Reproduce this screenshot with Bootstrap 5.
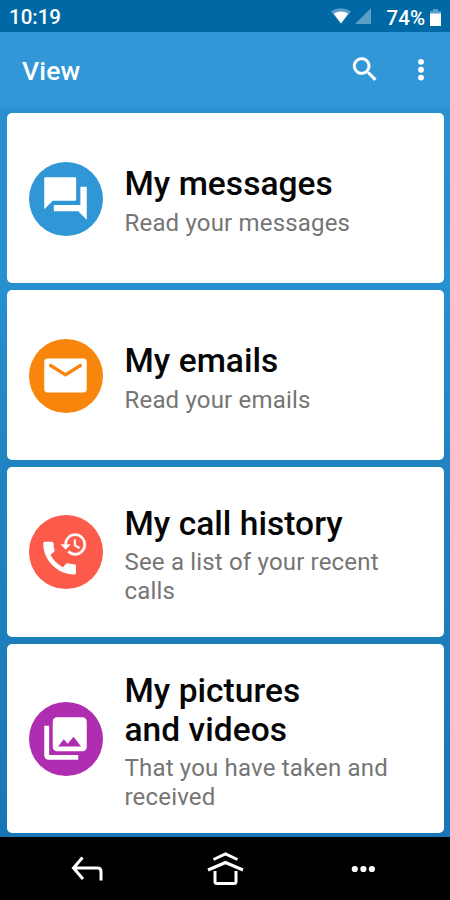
<!DOCTYPE html>
<html lang="en">
<head>
<meta charset="utf-8">
<meta name="viewport" content="width=device-width, initial-scale=1">
<title>View</title>
<link href="https://cdn.jsdelivr.net/npm/bootstrap@5.3.0/dist/css/bootstrap.min.css" rel="stylesheet">
<style>
body{font-family:Roboto,sans-serif;background:#000}
.screen{width:450px;height:900px;background:linear-gradient(#3097d6 0,#3097d6 105px,#2a8fce 112px,#2790cf 280px,#2084c2 460px,#1d7ebc 640px,#1976b6 837px)}
.status{height:32px;background:#0069a5;font-size:20.5px;font-weight:500;line-height:34px;padding:0 8px 0 9px}
.status .battery-level{line-height:32px;padding-top:3px}
.appbar{height:76px;background:#3197d6;padding:0 13.5px 0 22px}
.appbar h1{font-size:26.5px;font-weight:500;letter-spacing:.15px;padding-top:2px}
.tiles{padding:5.4px 6.5px 4px 7px;gap:6.6px}
.tile{height:170.3px;border-radius:5px;padding:0 20px 0 21.5px;gap:22px}
.tile-tall{height:189.5px}
.disc{width:74px;height:74px;margin-top:1.4px}
.disc-blue{background:#3097d6}.disc-orange{background:#f9860c}.disc-red{background:#fc5a4b}.disc-purple{background:#af2db0}
.tile-text{padding-top:6px}
.tile h2{font-size:33.5px;font-weight:500;line-height:39px;letter-spacing:.04px;color:#060606}
.tile p{font-size:24px;line-height:28.7px;letter-spacing:.18px;color:#757575;margin-top:5.5px}
.softkeys{height:63px;background:#000}
</style>
<script src="https://cdn.jsdelivr.net/npm/bootstrap@5.3.0/dist/js/bootstrap.bundle.min.js"></script>
</head>
<body>
<div class="screen d-flex flex-column overflow-hidden">
  <div class="status d-flex justify-content-between text-white">
    <span>10:19</span>
    <div class="d-flex align-items-center">
      <svg width="20" height="16" viewBox="0 0 20 16"><path d="M0 3.5Q10-3 20 3.5L10 15.5z" fill="#5c9fc6"/><path d="M2.700 5.500Q10 1.600 17.300 5.500L10 15.500z" fill="#fff"/></svg>
      <svg class="ms-1" width="16" height="16" viewBox="0 0 16 16"><path d="M0 16L16 0V16z" fill="#5c9fc6"/></svg>
      <span class="battery-level ms-3">74%</span>
      <svg class="ms-1 mt-1" width="13" height="18" viewBox="0 0 13 18"><path d="M4 0h5v2h3v3H1V2h3z" fill="#5c9fc6"/><path d="M1 4.500h11V17H1z" fill="#fff"/></svg>
    </div>
  </div>
  <header class="appbar d-flex align-items-center justify-content-between text-white">
    <h1 class="m-0">View</h1>
    <div class="d-flex align-items-center">
      <svg width="32" height="32" viewBox="0 0 24 24" fill="#fff" stroke="#fff" stroke-width=".3"><path d="M15.500 13.500h-.79l-.28-.27A6.470 6.470 0 0 0 16 9 6.500 6.500 0 1 0 9.500 15.500c1.610 0 3.090-.59 4.230-1.570l.27.28v.79l5 4.990L20.490 18.500l-4.990-5zm-6 0C7.010 13.500 5 11.490 5 9S7.010 4.500 9.500 4.500 14 6.510 14 9 11.990 13.500 9.500 13.500z"/></svg>
      <svg class="ms-4" width="32" height="32" viewBox="0 0 24 24" fill="#fff"><circle cx="12" cy="5.900" r="2.200"/><circle cx="12" cy="11.800" r="2.200"/><circle cx="12" cy="17.700" r="2.200"/></svg>
    </div>
  </header>
  <main class="tiles d-flex flex-column flex-grow-1">
    <section class="tile bg-white d-flex align-items-center flex-shrink-0">
      <div class="disc disc-blue rounded-circle d-flex align-items-center justify-content-center flex-shrink-0">
        <svg width="51" height="51" viewBox="0 0 24 24" fill="#fff"><path d="M21.500 6.500H19V15H6.500v2.500c0 .3.200.5.500.5h11l4 4V7c0-.3-.2-.5-.5-.5zM17 12.500v-10c0-.3-.2-.5-.5-.5h-14c-.3 0-.5.200-.5.500V17l4-4h10.500c.3 0 .5-.2.500-.5z"/></svg>
      </div>
      <div class="tile-text"><h2 class="m-0">My messages</h2><p class="mb-0">Read your messages</p></div>
    </section>
    <section class="tile bg-white d-flex align-items-center flex-shrink-0">
      <div class="disc disc-orange rounded-circle d-flex align-items-center justify-content-center flex-shrink-0">
        <svg width="51" height="51" viewBox="0 0 24 24"><rect x="2" y="4" width="20" height="16" rx="1.600" fill="#fff"/><path d="M5 7.300L12 11.700l7-4.400" fill="none" stroke="#f9860c" stroke-width="1.600" stroke-linecap="round"/></svg>
      </div>
      <div class="tile-text"><h2 class="m-0">My emails</h2><p class="mb-0">Read your emails</p></div>
    </section>
    <section class="tile bg-white d-flex align-items-center flex-shrink-0">
      <div class="disc disc-red rounded-circle d-flex align-items-center justify-content-center flex-shrink-0">
        <svg width="74" height="74" viewBox="0 0 74 74" fill="#fff"><g transform="translate(8.800 21.300) scale(1.820)"><path d="M20.010 15.380c-1.230 0-2.420-.2-3.530-.56-.35-.12-.74-.03-1.010.24l-1.570 1.970c-2.830-1.350-5.480-3.900-6.890-6.830l1.950-1.660c.27-.28.35-.67.24-1.020-.37-1.110-.56-2.300-.56-3.530 0-.54-.45-.99-.99-.99H4.190C3.650 3 3 3.240 3 3.990 3 13.280 10.730 21 20.010 21c.71 0 .99-.63.99-1.180v-3.450c0-.54-.45-.99-.99-.99z"/></g><g transform="translate(30.700 14.700) scale(1.190 1.230)"><path d="M13 3a9 9 0 0 0-9 9H1l3.890 3.890.07.14L9 12H6c0-3.870 3.130-7 7-7s7 3.130 7 7-3.130 7-7 7c-1.930 0-3.680-.79-4.940-2.060l-1.420 1.420A8.954 8.954 0 0 0 13 21a9 9 0 0 0 0-18zm-1 5v5l4.280 2.540.72-1.210-3.500-2.080V8H12z" stroke="#fff" stroke-width=".3"/></g></svg>
      </div>
      <div class="tile-text"><h2 class="m-0">My call history</h2><p class="mb-0">See a list of your recent calls</p></div>
    </section>
    <section class="tile tile-tall bg-white d-flex align-items-center flex-shrink-0">
      <div class="disc disc-purple rounded-circle d-flex align-items-center justify-content-center flex-shrink-0">
        <svg width="51" height="51" viewBox="0 0 24 24" fill="#fff"><path d="M22 16V4c0-1.100-.9-2-2-2H8c-1.100 0-2 .9-2 2v12c0 1.100.9 2 2 2h12c1.100 0 2-.9 2-2zM8.500 15.800l2.700-3.500 1.800 2.200 2.800-3.300 3.500 4.600zM2 6v14c0 1.100.9 2 2 2h14v-2.200H4.300V6H2z"/></svg>
      </div>
      <div class="tile-text"><h2 class="m-0">My pictures<br>and videos</h2><p class="mb-0">That you have taken and received</p></div>
    </section>
  </main>
  <nav class="softkeys flex-shrink-0">
    <svg class="d-block" width="450" height="63" viewBox="0 0 450 63" fill="none" stroke="#fff" stroke-width="3">
      <path d="M82.500 20.500L73.500 31l9.500 11M73 31h24.500q3.500 0 3.500 3.500V43.500"/>
      <path d="M213.500 22.500L225.500 17l12 5.500M208 33l17.500-7.500L243 33M215 34v10.500q0 2 2 2h17q2 0 2-2V34"/>
      <g fill="#fff" stroke="none"><circle cx="354.800" cy="32" r="3.100"/><circle cx="363.400" cy="32" r="3.100"/><circle cx="371.900" cy="32" r="3.100"/></g>
    </svg>
  </nav>
</div>
</body>
</html>
